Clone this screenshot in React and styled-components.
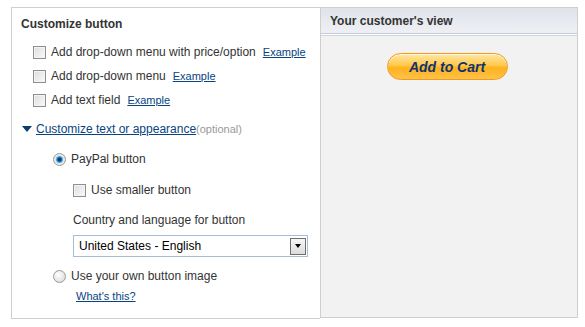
import React from 'react'
import styled, { createGlobalStyle } from 'styled-components'

const GlobalStyle = createGlobalStyle`
  body {
    margin: 0;
    background: #fff;
    font-family: "Liberation Sans", Arial, sans-serif;
    font-size: 12px;
    color: #333;
  }
`

const Frame = styled.div`
  display: flex;
  margin: 7px 0 0 11px;
  width: 567px;
  height: 312px;
  box-sizing: border-box;
`

const LeftPanel = styled.div`
  width: 309px;
  border: 1px solid #cfcfcf;
  border-right: none;
  box-sizing: border-box;
  display: flex;
  flex-direction: column;
`

const RightPanel = styled.div`
  flex: 1;
  border: 1px solid #cfcfcf;
  background: #f2f2f2;
  box-sizing: border-box;
  display: flex;
  flex-direction: column;
  height: 311px;
`

const PanelHeader = styled.div`
  height: 25px;
  padding-left: 9px;
  display: flex;
  align-items: center;
  font-weight: bold;
  color: #333;
  background: linear-gradient(#dfe3ea, #eef0f4);
  border-bottom: 1px solid #c6ccd4;
  box-shadow: 0 1px 0 #ffffff, 0 2px 0 #d2d6dc;
`

const Preview = styled.div`
  display: flex;
  justify-content: center;
  padding-top: 19px;
  padding-right: 4px;
`

const CartButton = styled.button`
  width: 121px;
  height: 27px;
  border-radius: 14px;
  border: 1px solid #f29a1e;
  background: linear-gradient(#ffe7a8 0%, #ffc94a 45%, #ffb21e 55%, #ffc24a 100%);
  box-shadow: inset 0 1px 0 #fff6d8;
  font-family: "Liberation Sans", Arial, sans-serif;
  font-size: 14px;
  font-weight: bold;
  font-style: italic;
  color: #0d3470;
  padding: 0;
  cursor: pointer;
`

const Heading = styled.div`
  font-weight: bold;
  line-height: 16px;
  padding: 8px 0 0 9px;
  color: #333;
`

const Row = styled.div`
  display: flex;
  align-items: center;
  height: ${p => p.$height || 24}px;
  padding-left: ${p => p.$indent}px;
  margin-top: ${p => p.$gap || 0}px;
`

const Box = styled.span`
  width: 11px;
  height: 11px;
  border: 1px solid #8e8f8f;
  background: linear-gradient(135deg, #dcdcdc, #fbfbfb);
  box-shadow: inset 0 0 0 1px #f4f4f4;
  margin-right: 5px;
  flex-shrink: 0;
`

const Radio = styled.span`
  width: 11px;
  height: 11px;
  border-radius: 50%;
  border: 1px solid #9a9a9a;
  background: ${p => p.$checked
    ? 'radial-gradient(circle, #0b3f6e 0 1.5px, #2a8fd6 2.5px, #7fc2ee 3.5px, #e8e8e8 4px)'
    : 'radial-gradient(circle at 40% 35%, #ffffff, #d4d4d4)'};
  margin-right: 5px;
  flex-shrink: 0;
`

const Label = styled.span`
  color: #333;
  white-space: nowrap;
`

const SmallLink = styled.a`
  font-size: 11px;
  color: #084482;
  text-decoration: underline;
  margin-left: ${p => (p.$flush ? 0 : 7)}px;
  cursor: pointer;
`

const Toggle = styled.a`
  color: #084482;
  text-decoration: underline;
  cursor: pointer;
`

const Triangle = styled.span`
  width: 0;
  height: 0;
  border-left: 5px solid transparent;
  border-right: 5px solid transparent;
  border-top: 6px solid #0b3e6f;
  margin-right: 4px;
`

const Optional = styled.span`
  font-size: 11px;
  color: #999;
`

const Options = styled.div`
  margin-top: 8px;
`

const SelectBox = styled.div`
  margin: 3px 0 0 61px;
  width: 235px;
  height: 22px;
  box-sizing: border-box;
  border: 1px solid #a5bdd5;
  background: #fff;
  display: flex;
  align-items: center;
  justify-content: space-between;
  padding: 0 1px 0 5px;
  color: #000;
`

const ArrowButton = styled.span`
  width: 16px;
  height: 17px;
  box-sizing: border-box;
  border: 1px solid #6f6f6f;
  background: linear-gradient(#f6f6f6, #dcdcdc);
  display: flex;
  align-items: center;
  justify-content: center;

  &::after {
    content: '';
    border-left: 3.5px solid transparent;
    border-right: 3.5px solid transparent;
    border-top: 4px solid #000;
  }
`

const Checkbox = ({ label, link }) => (
  <Row $indent={21}>
    <Box />
    <Label>{label}</Label>
    {link && <SmallLink>{link}</SmallLink>}
  </Row>
)

export default function App() {
  return (
    <>
      <GlobalStyle />
      <Frame>
        <LeftPanel>
          <Heading>Customize button</Heading>
          <Options>
            <Checkbox label="Add drop-down menu with price/option" link="Example" />
            <Checkbox label="Add drop-down menu" link="Example" />
            <Checkbox label="Add text field" link="Example" />
          </Options>
          <Row $indent={10} $gap={5}>
            <Triangle />
            <Toggle>Customize text or appearance</Toggle>
            <Optional>(optional)</Optional>
          </Row>
          <Row $indent={41} $gap={6}>
            <Radio $checked />
            <Label>PayPal button</Label>
          </Row>
          <Row $indent={61} $gap={7}>
            <Box />
            <Label>Use smaller button</Label>
          </Row>
          <Row $indent={61} $gap={6}>
            <Label>Country and language for button</Label>
          </Row>
          <SelectBox>
            <span>United States - English</span>
            <ArrowButton />
          </SelectBox>
          <Row $indent={41} $gap={7}>
            <Radio />
            <Label>Use your own button image</Label>
          </Row>
          <Row $indent={64} $height={16}>
            <SmallLink $flush>What's this?</SmallLink>
          </Row>
        </LeftPanel>
        <RightPanel>
          <PanelHeader>Your customer's view</PanelHeader>
          <Preview>
            <CartButton>Add to Cart</CartButton>
          </Preview>
        </RightPanel>
      </Frame>
    </>
  )
}
